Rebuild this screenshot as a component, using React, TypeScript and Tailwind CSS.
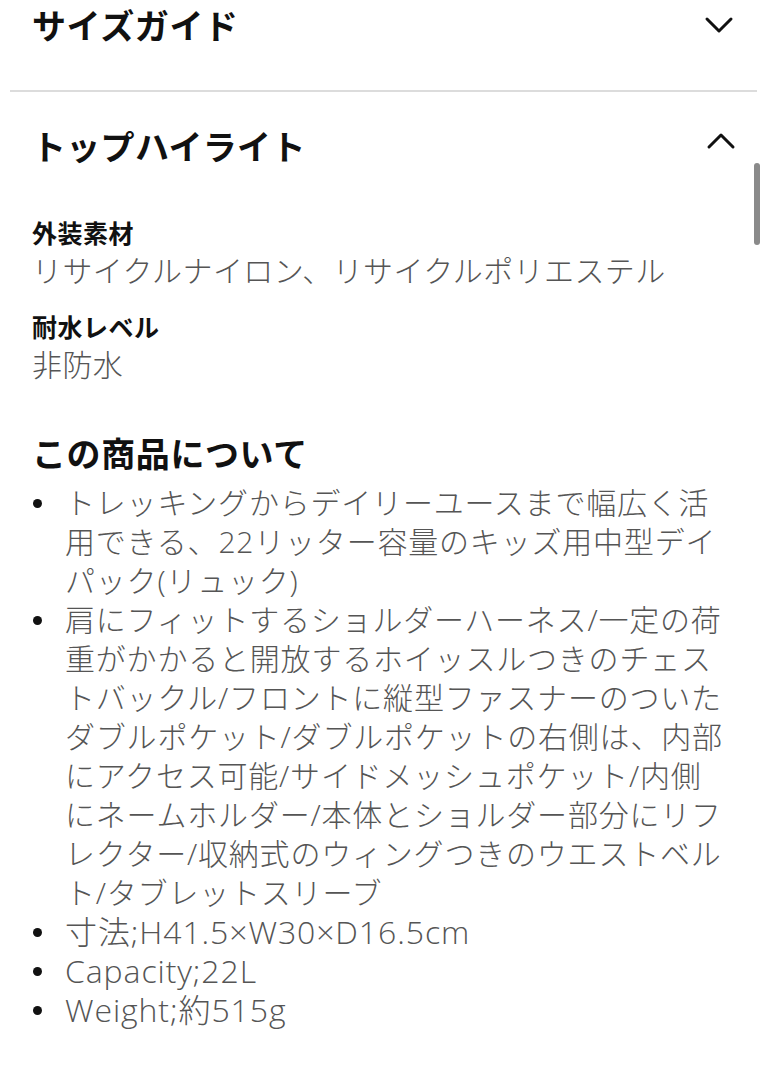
import React from 'react'

const HEAD_FONT = 'font-["Noto_Sans_CJK_JP",sans-serif]'
const BODY_FONT = 'font-["Open_Sans","Noto_Sans_CJK_JP",sans-serif]'

const SPECS = [
  { label: '外装素材', value: 'リサイクルナイロン、リサイクルポリエステル' },
  { label: '耐水レベル', value: '非防水' },
]

// latin: 英数字が主の行は少し大きめ
const POINTS = [
  { text: 'トレッキングからデイリーユースまで幅広く活用できる、22リッター容量のキッズ用中型デイパック(リュック)' },
  {
    text: '肩にフィットするショルダーハーネス/一定の荷重がかかると開放するホイッスルつきのチェストバックル/フロントに縦型ファスナーのついたダブルポケット/ダブルポケットの右側は、内部にアクセス可能/サイドメッシュポケット/内側にネームホルダー/本体とショルダー部分にリフレクター/収納式のウィングつきのウエストベルト/タブレットスリーブ',
  },
  { text: '寸法;H41.5×W30×D16.5cm', latin: true },
  { text: 'Capacity;22L', latin: true },
  { text: 'Weight;約515g', latin: true },
]

function Chevron({ up }: { up?: boolean }) {
  return (
    <svg width="30" height="18" viewBox="0 0 30 18" fill="none">
      <polyline
        points={up ? '3,15 15,3 27,15' : '3,3 15,15 27,3'}
        stroke="#111"
        strokeWidth="3"
        strokeLinecap="round"
        strokeLinejoin="round"
      />
    </svg>
  )
}

export default function App() {
  return (
    <div className={`relative min-h-[1080px] w-[767px] overflow-hidden bg-white ${HEAD_FONT}`}>
      <div className="px-[10px]">
        {/* サイズガイド */}
        <div className="flex h-[50px] items-center justify-between pl-[22px] pr-[23px]">
          <h2 className="text-[34px] font-bold leading-none tracking-[0.6px] text-[#111]">サイズガイド</h2>
          <Chevron />
        </div>
        <div className="mt-[40px] border-t-2 border-[#dcdcdc]" />

        {/* トップハイライト */}
        <div className="mt-[29px] flex h-[50px] items-center justify-between pl-[22px] pr-[21px]">
          <h2 className="text-[34px] font-bold leading-none tracking-[0.3px] text-[#111]">トップハイライト</h2>
          <div className="-mt-[10px]">
            <Chevron up />
          </div>
        </div>

        <div className={`pl-[22px] pr-[30px] ${BODY_FONT}`}>
          <div className="mt-[44px]">
            {SPECS.map((s, i) => (
              <div key={s.label} className={i > 0 ? 'mt-[19px]' : ''}>
                <p className={`text-[25px] font-bold leading-[34px] tracking-[0.5px] text-[#111] ${HEAD_FONT}`}>{s.label}</p>
                <p className="mt-[3px] text-[30px] font-light leading-[38px] tracking-[0.4px] text-[#555]">{s.value}</p>
              </div>
            ))}
          </div>

          <h3 className={`mt-[47px] text-[34px] font-bold leading-[44px] tracking-[0.6px] text-[#111] ${HEAD_FONT}`}>
            この商品について
          </h3>
          <ul className="mt-[8px]">
            {POINTS.map((p) => (
              <li
                key={p.text}
                className={`flex font-light leading-[39px] text-[#555] ${
                  p.latin ? 'text-[32px] tracking-[0.9px]' : 'text-[30px] tracking-[0.8px]'
                }`}
              >
                <span className="flex w-[33px] shrink-0 pt-[16px]">
                  <span className="ml-[1px] h-[9px] w-[9px] rounded-full bg-[#111]" />
                </span>
                <span>{p.text}</span>
              </li>
            ))}
          </ul>
        </div>
      </div>

      {/* scrollbar */}
      <div className="absolute left-[754px] top-[163px] h-[82px] w-[6px] rounded-full bg-[#8a8a8a]" />
    </div>
  )
}
